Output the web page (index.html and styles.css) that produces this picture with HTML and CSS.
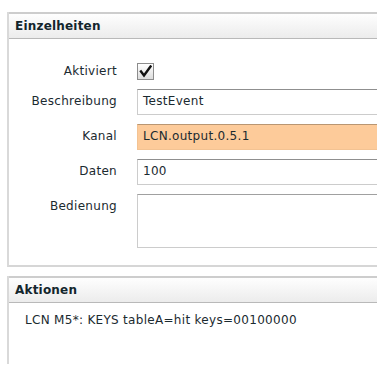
FILE: index.html
```html
<!DOCTYPE html>
<html lang="de">
<head>
<meta charset="utf-8">
<link rel="stylesheet" href="styles.css">
</head>
<body>
<section class="panel">
  <div class="panel-head">Einzelheiten</div>
  <div class="panel-body form">
    <label class="lbl lbl-check">Aktiviert</label>
    <div class="check-wrap">
      <span class="checkbox">
        <svg width="13" height="13" viewBox="0 0 13 13"><path d="M2 6.5 L5 10.5 L11.5 1.5" fill="none" stroke="#111" stroke-width="2.4" stroke-linejoin="miter" stroke-linecap="square"/></svg>
      </span>
    </div>
    <label class="lbl">Beschreibung</label>
    <div class="field">TestEvent</div>
    <label class="lbl">Kanal</label>
    <div class="field field-hl">LCN.output.0.5.1</div>
    <label class="lbl">Daten</label>
    <div class="field">100</div>
    <label class="lbl lbl-area">Bedienung</label>
    <div class="field field-area"></div>
  </div>
</section>
<section class="panel panel-actions">
  <div class="panel-head">Aktionen</div>
  <div class="panel-body actions">LCN M5*: KEYS tableA=hit keys=00100000</div>
</section>
</body>
</html>
```

FILE: styles.css
```css
html, body {
  margin: 0;
  padding: 0;
  background: #fff;
  overflow: hidden;
}
body {
  font-family: "DejaVu Sans", Verdana, sans-serif;
  font-size: 12px;
  line-height: 14px;
  letter-spacing: 0.3px;
  color: #1b2a30;
  padding: 12px 0 0 7px;
  height: 365px;
  box-sizing: border-box;
}
.panel {
  border-left: 2px solid #d9d9d9;
  border-bottom: 2px solid #d6d6d6;
}
.panel-actions {
  margin-top: 9px;
  border-bottom: none;
  height: 88px;
  box-sizing: border-box;
}
.panel-head {
  border-top: 2px solid #cdcdcd;
  border-bottom: 1px solid #b9b9b9;
  background: linear-gradient(#fefefe, #ececec);
  padding: 5px 6px;
  font-weight: bold;
  letter-spacing: 0.2px;
  color: #13262d;
}
.form {
  display: grid;
  grid-template-columns: 108px 1fr;
  column-gap: 20px;
  row-gap: 9px;
  padding: 23px 0 17px 0;
}
.lbl {
  text-align: right;
  padding-top: 5px;
}
.lbl-check {
  padding-top: 2px;
}
.check-wrap {
  height: 18px;
}
.checkbox {
  display: flex;
  align-items: center;
  justify-content: center;
  width: 15px;
  height: 15px;
  border: 1px solid #8c8c8c;
  background: linear-gradient(#ffffff, #dcdcdc);
  margin-top: 1px;
}
.field {
  height: 16px;
  padding: 4px 5px;
  border: 1px solid #cccccc;
  border-top-color: #8f8f8f;
  border-right: none;
  background: #fff;
}
.field-hl {
  background: #fdcb9a;
  border-color: #f3c393;
  border-top-color: #b99672;
}
.field-area {
  height: 44px;
  border-top-color: #a0a0a0;
}
.actions {
  padding: 10px 16px;
}
```
